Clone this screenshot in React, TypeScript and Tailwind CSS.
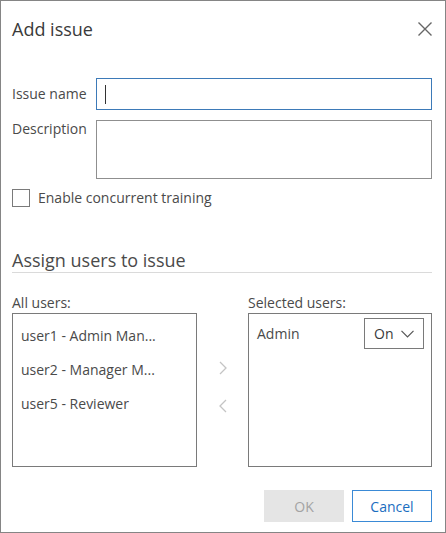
import React from "react";

export default function App() {
  return (
    <div className="w-[446px] h-[533px] box-border border border-[#858585] bg-white font-['Open_Sans',sans-serif] text-[#4a4a4a]">
      <div className="pt-[16px] pl-[11px] pr-[13px]">
        {/* Title row */}
        <div className="flex items-center justify-between h-[24px]">
          <span className="text-[18px] leading-[24px] text-[#3a3a3a]">Add issue</span>
          <svg width="14" height="14" viewBox="0 0 14 14" className="block">
            <path d="M0.5 0.5 L13.5 13.5 M13.5 0.5 L0.5 13.5" stroke="#666" strokeWidth="1.4" fill="none" />
          </svg>
        </div>

        {/* Issue name */}
        <div className="mt-[37px] flex items-center">
          <div className="w-[84px] text-[14px] leading-[20px]">Issue name</div>
          <div className="flex-1 h-[32px] border border-[#3d7ab8] flex items-center pl-[8px]">
            <div className="w-[1px] h-[19px] bg-[#333]" />
          </div>
        </div>

        {/* Description */}
        <div className="mt-[10px] flex items-start">
          <div className="w-[84px] text-[14px] leading-[20px] -mt-[1px]">Description</div>
          <div className="flex-1 h-[59px] border border-[#8f8f8f]" />
        </div>

        {/* Checkbox */}
        <div className="mt-[10px] h-[18px] flex items-center gap-[8px]">
          <div className="w-[18px] h-[18px] border border-[#7a7a7a] bg-white" />
          <span className="text-[14px] leading-[20px]">Enable concurrent training</span>
        </div>

        {/* Section heading */}
        <div className="mt-[41px] border-b border-[#dadada] text-[18px] leading-[24px] text-[#4a4a4a]">
          Assign users to issue
        </div>

        {/* Lists */}
        <div className="mt-[20px] grid grid-cols-[185px_51px_184px]">
          <div className="flex flex-col">
            <div className="text-[14px] leading-[20px]">All users:</div>
            <div className="h-[154px] border border-[#7a7a7a] pt-[5px] pl-[8px]">
              <div className="h-[34px] flex items-center text-[14px] leading-[20px]">user1 - Admin Man...</div>
              <div className="h-[34px] flex items-center text-[14px] leading-[20px]">user2 - Manager M...</div>
              <div className="h-[34px] flex items-center text-[14px] leading-[20px]">user5 - Reviewer</div>
            </div>
          </div>
          <div className="pt-[20px] flex flex-col items-center">
            <svg width="8" height="14" viewBox="0 0 8 14" className="mt-[48px] block">
              <path d="M1 1 L7 7 L1 13" stroke="#c4c4c4" strokeWidth="1.3" fill="none" />
            </svg>
            <svg width="8" height="14" viewBox="0 0 8 14" className="mt-[24px] block">
              <path d="M7 1 L1 7 L7 13" stroke="#c4c4c4" strokeWidth="1.3" fill="none" />
            </svg>
          </div>
          <div className="flex flex-col">
            <div className="text-[14px] leading-[20px]">Selected users:</div>
            <div className="h-[154px] border border-[#7a7a7a] pt-[4px] pl-[8px] pr-[7px]">
              <div className="flex items-start justify-between">
                <span className="mt-[6px] text-[14px] leading-[20px]">Admin</span>
                <div className="w-[60px] h-[31px] border border-[#7a7a7a] flex items-center pl-[9px] gap-[8px]">
                  <span className="text-[14px] leading-[20px] text-[#3a3a3a]">On</span>
                  <svg width="13" height="8" viewBox="0 0 13 8" className="block">
                    <path d="M0.5 0.8 L6.5 6.8 L12.5 0.8" stroke="#555" strokeWidth="1.2" fill="none" />
                  </svg>
                </div>
              </div>
            </div>
          </div>
        </div>

        {/* Buttons */}
        <div className="mt-[23px] flex justify-end gap-[8px]">
          <div className="w-[80px] h-[32px] bg-[#e5e5e5] flex items-center justify-center text-[14px] text-[#a3a3a3]">
            OK
          </div>
          <div className="w-[80px] h-[32px] border border-[#3a8ad6] bg-white flex items-center justify-center text-[14px] text-[#1a6dc0]">
            Cancel
          </div>
        </div>
      </div>
    </div>
  );
}
